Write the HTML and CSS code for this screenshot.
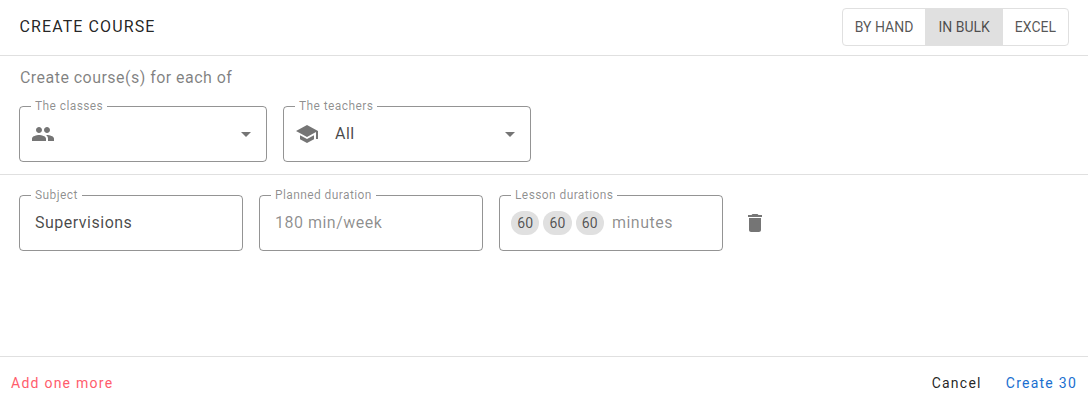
FILE: index.html
```html
<!DOCTYPE html>
<html lang="en">
<head>
    <meta charset="UTF-8">
    <title>Create course</title>
    <link rel="stylesheet" href="styles.css">
</head>
<body>
    <div class="dialog">
        <header class="dialog-header">
            <h2 class="dialog-title">Create course</h2>
            <div class="toggle-group">
                <button class="toggle">By hand</button>
                <button class="toggle selected">In bulk</button>
                <button class="toggle">Excel</button>
            </div>
        </header>

        <section class="scope">
            <p class="hint">Create course(s) for each of</p>
            <div class="field-row">
                <div class="field select-field">
                    <span class="field-label">The classes</span>
                    <svg class="icon field-icon" viewBox="0 0 24 24"><path d="M16 11c1.66 0 2.99-1.34 2.99-3S17.66 5 16 5c-1.66 0-3 1.34-3 3s1.34 3 3 3zm-8 0c1.66 0 2.99-1.34 2.99-3S9.66 5 8 5C6.34 5 5 6.34 5 8s1.34 3 3 3zm0 2c-2.33 0-7 1.17-7 3.5V19h14v-2.5c0-2.33-4.67-3.5-7-3.5zm8 0c-.29 0-.62.02-.97.05 1.16.84 1.97 1.97 1.97 3.45V19h6v-2.5c0-2.33-4.67-3.5-7-3.5z"/></svg>
                    <span class="field-value"></span>
                    <svg class="icon arrow" viewBox="0 0 24 24"><path d="M7 10l5 5 5-5z"/></svg>
                </div>
                <div class="field select-field">
                    <span class="field-label">The teachers</span>
                    <svg class="icon field-icon" viewBox="0 0 24 24"><path d="M5 13.18v4L12 21l7-3.82v-4L12 17l-7-3.82zM12 3L1 9l11 6 9-4.91V17h2V9L12 3z"/></svg>
                    <span class="field-value">All</span>
                    <svg class="icon arrow" viewBox="0 0 24 24"><path d="M7 10l5 5 5-5z"/></svg>
                </div>
            </div>
        </section>

        <section class="rows">
            <div class="field-row">
                <div class="field text-field">
                    <span class="field-label">Subject</span>
                    <span class="field-value">Supervisions</span>
                </div>
                <div class="field text-field">
                    <span class="field-label">Planned duration</span>
                    <span class="field-value placeholder">180 min/week</span>
                </div>
                <div class="field chips-field">
                    <span class="field-label">Lesson durations</span>
                    <span class="chip">60</span>
                    <span class="chip">60</span>
                    <span class="chip">60</span>
                    <span class="field-value placeholder unit">minutes</span>
                </div>
                <button class="icon-button" aria-label="Delete">
                    <svg class="icon" viewBox="0 0 24 24"><path d="M6 19c0 1.1.9 2 2 2h8c1.1 0 2-.9 2-2V7H6v12zM19 4h-3.5l-1-1h-5l-1 1H5v2h14V4z"/></svg>
                </button>
            </div>
        </section>

        <footer class="dialog-footer">
            <button class="action danger">Add one more</button>
            <div class="footer-right">
                <button class="action">Cancel</button>
                <button class="action primary">Create 30</button>
            </div>
        </footer>
    </div>
</body>
</html>
```

FILE: styles.css
```css
* {
    box-sizing: border-box;
}
body {
    margin: 0;
    font-family: Roboto, "Liberation Sans", sans-serif;
    background: #fff;
}
button {
    font-family: inherit;
    background: none;
    border: 0;
    cursor: pointer;
}
.dialog {
    display: flex;
    flex-direction: column;
    height: 400px;
}
.dialog-header {
    display: flex;
    justify-content: space-between;
    align-items: center;
    height: 56px;
    padding: 0 19px 2px 19.5px;
    border-bottom: 1px solid #e0e0e0;
}
.dialog-title {
    margin: 0;
    font-size: 16px;
    font-weight: 400;
    letter-spacing: 1.1px;
    text-transform: uppercase;
    color: rgba(0, 0, 0, 0.87);
}
.toggle-group {
    display: flex;
    height: 38px;
    border: 1px solid #e0e0e0;
    border-radius: 4px;
}
.toggle {
    padding: 0 12px;
    font-size: 14px;
    text-transform: uppercase;
    color: rgba(0, 0, 0, 0.68);
}
.toggle.selected {
    padding: 0 13px;
    background: #e0e0e0;
}
.scope {
    padding: 12px 19px 12px;
    border-bottom: 1px solid #e0e0e0;
}
.hint {
    margin: 0 0 19px;
    padding-left: 1px;
    font-size: 16px;
    line-height: 19px;
    letter-spacing: 0.46px;
    color: rgba(0, 0, 0, 0.5);
}
.field-row {
    display: flex;
    align-items: center;
    gap: 16px;
}
.field {
    position: relative;
    display: flex;
    align-items: center;
    height: 56px;
    border: 1px solid rgba(0, 0, 0, 0.42);
    border-radius: 4px;
}
.field-label {
    position: absolute;
    top: -8px;
    left: 11px;
    padding: 0 4px;
    font-size: 12px;
    line-height: 14px;
    letter-spacing: 0.4px;
    background: #fff;
    color: rgba(0, 0, 0, 0.45);
}
.field-value {
    margin-bottom: 2px;
    font-size: 16px;
    letter-spacing: 0.5px;
    color: rgba(0, 0, 0, 0.72);
}
.placeholder {
    color: rgba(0, 0, 0, 0.45);
}
.icon {
    display: block;
    width: 24px;
    height: 24px;
    fill: rgba(0, 0, 0, 0.54);
}
.select-field {
    width: 248px;
    padding: 0 8px 0 11px;
}
.select-field .field-value {
    flex: 1;
    margin-left: 16px;
}
.text-field {
    width: 224px;
    padding: 0 15px;
}
.chips-field {
    width: 224px;
    gap: 4px;
    padding: 0 11px;
}
.chip {
    display: flex;
    align-items: center;
    justify-content: center;
    width: 28.3px;
    height: 24px;
    border-radius: 12px;
    font-size: 14px;
    background: #e0e0e0;
    color: rgba(0, 0, 0, 0.65);
}
.unit {
    margin-left: 4px;
}
.icon-button {
    display: block;
    padding: 0;
    margin-left: 4px;
    margin-top: -1px;
}
.rows {
    flex: 1;
    padding: 20px 19px;
    border-bottom: 1px solid #e0e0e0;
}
.dialog-footer {
    display: flex;
    justify-content: space-between;
    align-items: center;
    height: 43px;
    padding: 9px 11px 0;
}
.footer-right {
    display: flex;
    gap: 24px;
}
.action {
    padding: 0;
    font-size: 14px;
    letter-spacing: 1.25px;
    color: rgba(0, 0, 0, 0.87);
}
.action.danger {
    color: #ff5c6c;
}
.action.primary {
    color: #1a6fd0;
}
```
